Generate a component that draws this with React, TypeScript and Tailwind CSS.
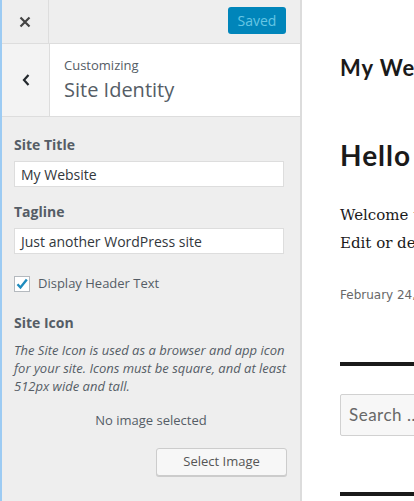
import React from "react";

export default function App() {
  const os = { fontFamily: '"Open Sans", "Noto Sans", sans-serif' } as React.CSSProperties;
  const hd = { fontFamily: 'Lato, "Noto Sans", sans-serif' } as React.CSSProperties;
  return (
    <div className="flex h-[501px] w-[414px] overflow-hidden bg-white" style={os}>
      {/* left accent */}
      <div className="w-[2px] shrink-0 bg-[#9ccbf3]" />
      {/* sidebar */}
      <div className="flex w-[300px] shrink-0 flex-col border-r-2 border-[#dcdcdc] bg-[#eeeeee]">
        {/* top bar */}
        <div className="flex h-[44px] shrink-0 items-start border-b border-[#dddddd]">
          <div className="flex h-full w-[47px] items-center justify-center border-r border-[#dddddd]">
            <svg width="12" height="12" viewBox="0 0 12 12">
              <path d="M1.5 1.5 L10.5 10.5 M10.5 1.5 L1.5 10.5" stroke="#444" strokeWidth="2.2" />
            </svg>
          </div>
          <div className="flex flex-1 justify-end pr-[14px] pt-[7px]">
            <div className="flex h-[27px] w-[58px] items-center justify-center rounded-[3px] bg-[#0085ba] text-[14px] text-[#66c6e4]">
              Saved
            </div>
          </div>
        </div>
        {/* section header */}
        <div className="flex h-[73px] shrink-0 border-b border-[#dddddd] bg-white">
          <div className="flex w-[48px] items-center justify-center border-r border-[#dddddd] bg-[#f3f3f3]">
            <svg width="10" height="14" viewBox="0 0 10 14">
              <path d="M7.5 2 L3 7 L7.5 12" stroke="#23282d" strokeWidth="2.2" fill="none" />
            </svg>
          </div>
          <div className="flex flex-col justify-center pl-[14px]">
            <div className="text-[13px] leading-[18px] text-[#555d66]">Customizing</div>
            <div className="mt-[2px] text-[20px] leading-[28px] text-[#555d66]">Site Identity</div>
          </div>
        </div>
        {/* controls */}
        <div className="flex flex-col px-[12px] pt-[18px]">
          <div className="text-[14px] font-bold leading-[20px] text-[#555d66]">Site Title</div>
          <div className="mt-[6px] flex h-[26px] w-[270px] items-center border border-[#dddddd] bg-white px-[6px] text-[14px] text-[#32373c]">
            My Website
          </div>
          <div className="mt-[15px] text-[14px] font-bold leading-[20px] text-[#555d66]">Tagline</div>
          <div className="mt-[6px] flex h-[26px] w-[270px] items-center border border-[#dddddd] bg-white px-[6px] text-[14px] text-[#32373c]">
            Just another WordPress site
          </div>
          <div className="mt-[20px] flex items-center">
            <div className="flex h-[16px] w-[16px] items-center justify-center border border-[#b4b9be] bg-white">
              <svg width="14" height="14" viewBox="0 0 14 14">
                <path d="M2.5 7.2 L5.5 10.5 L11.8 2.5" stroke="#1e8cbe" strokeWidth="2.4" fill="none" />
              </svg>
            </div>
            <span className="ml-[8px] text-[13px] text-[#555d66]">Display Header Text</span>
          </div>
          <div className="mt-[19px] text-[14px] font-bold leading-[20px] text-[#555d66]">Site Icon</div>
          <div className="mt-[8px] w-[274px] whitespace-nowrap text-[13px] italic leading-[18px] text-[#555d66]">
            The Site Icon is used as a browser and app icon
            <br />
            for your site. Icons must be square, and at least
            <br />
            512px wide and tall.
          </div>
          <div className="mt-[15px] text-center text-[13px] leading-[20px] text-[#555d66]">No image selected</div>
          <div className="mt-[18px] flex justify-end pr-[1px]">
            <div className="flex h-[28px] w-[131px] items-center justify-center rounded-[3px] border border-[#cccccc] bg-[#f7f7f7] text-[13px] text-[#555555] shadow-[0_1px_0_#cccccc]">
              Select Image
            </div>
          </div>
        </div>
      </div>
      {/* preview */}
      <div className="flex min-w-0 flex-1 flex-col overflow-hidden bg-white pl-[38px]">
        <div className="mt-[54px] whitespace-nowrap text-[22px] font-bold leading-[28px] tracking-[1px] text-[#1a1a1a]" style={hd}>
          My Website
        </div>
        <div className="mt-[56px] whitespace-nowrap text-[28px] font-bold leading-[34px] tracking-[1px] text-[#1a1a1a]" style={hd}>
          Hello world!
        </div>
        <div
          className="mt-[29px] whitespace-nowrap text-[15px] leading-[28px] text-[#1a1a1a]"
          style={{ fontFamily: '"DejaVu Serif", serif' }}
        >
          <div>Welcome to WordPress.</div>
          <div>Edit or delete it</div>
        </div>
        <div
          className="mt-[30px] whitespace-nowrap text-[12px] leading-[16px] text-[#686868]"
          style={{ fontFamily: '"DejaVu Sans", sans-serif' }}
        >
          February 24, 2016
        </div>
        <div className="mt-[59px] h-[4px] w-[200px] shrink-0 bg-[#1a1a1a]" />
        <div
          className="mt-[28px] flex h-[42px] w-[200px] shrink-0 items-center rounded-[2px] border border-[#d1d1d1] bg-[#f7f7f7] pl-[8px] text-[17px] tracking-[0.5px] text-[#686868]"
          style={hd}
        >
          Search …
        </div>
        <div className="mt-[56px] h-[4px] w-[200px] shrink-0 bg-[#1a1a1a]" />
      </div>
    </div>
  );
}
